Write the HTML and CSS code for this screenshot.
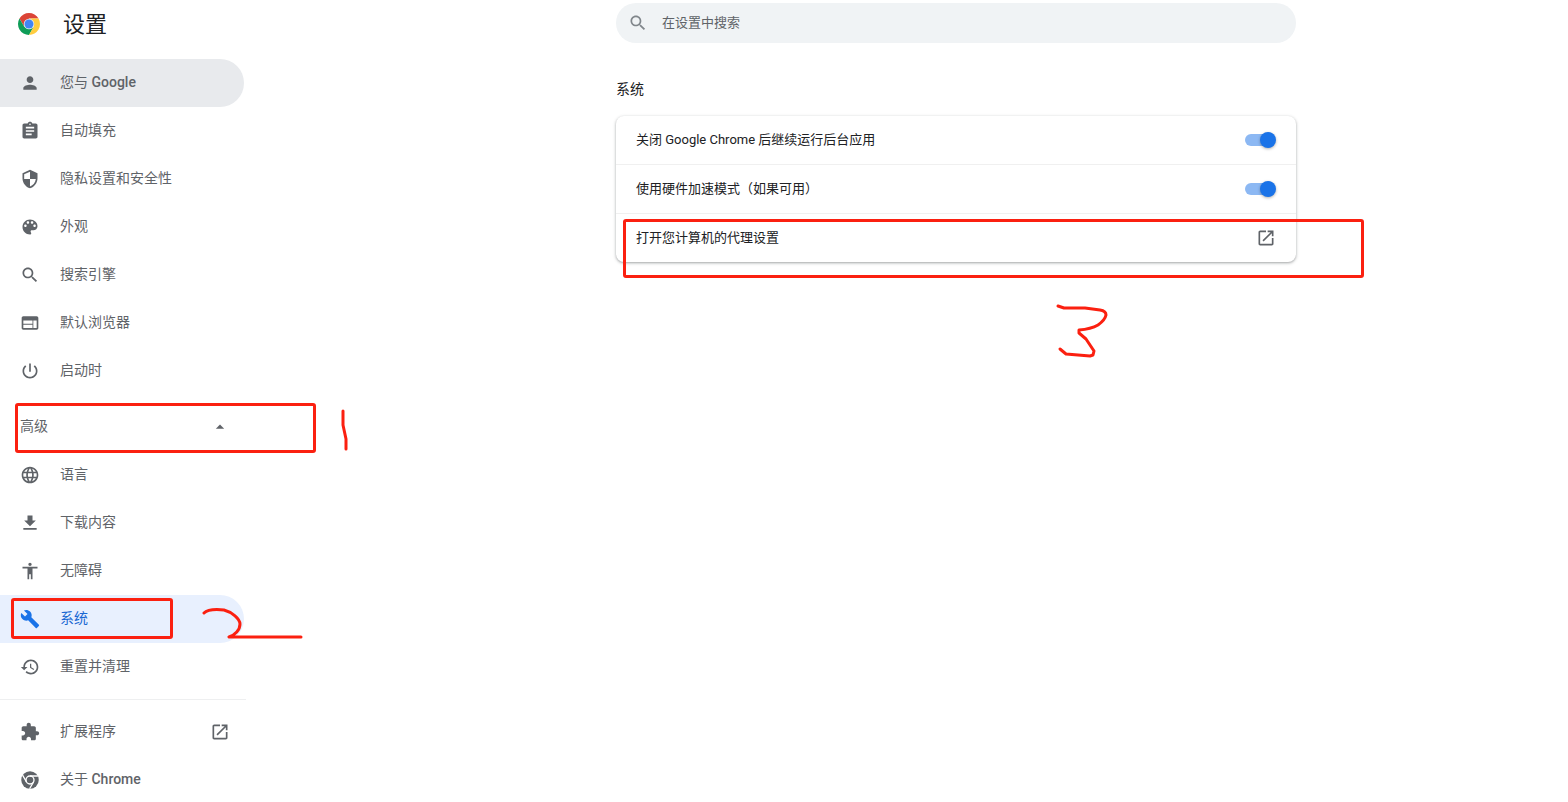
FILE: index.html
```html
<!DOCTYPE html>
<html lang="zh-CN">

<head>
    <meta charset="UTF-8">
    <meta name="viewport" content="width=device-width, initial-scale=1.0">
    <title>设置</title>
    <link rel="stylesheet" href="styles.css">
</head>

<body>
    <aside class="sidebar">
        <div class="brand">
            <svg class="logo" viewBox="0 0 48 48">
                <path fill="#db4437" d="M4.95 13A22 22 0 0 1 43.05 13H24L14.5 29.5z" />
                <path fill="#0f9d58" d="M4.95 13A22 22 0 0 0 24 46L33.5 29.5H14.5z" />
                <path fill="#ffcd40" d="M43.05 13A22 22 0 0 1 24 46L33.5 29.5 24 13z" />
                <circle cx="24" cy="24" r="10.5" fill="#f1f1f1" />
                <circle cx="24" cy="24" r="9" fill="#4285f4" />
            </svg>
            <h1>设置</h1>
        </div>
        <nav class="menu">
            <a href="#people" class="hovered">
                <svg class="icon" viewBox="0 0 24 24"><path d="M12 12c2.21 0 4-1.79 4-4s-1.79-4-4-4-4 1.79-4 4 1.79 4 4 4zm0 2c-2.67 0-8 1.34-8 4v2h16v-2c0-2.66-5.33-4-8-4z" /></svg>
                <span>您与 <b>Google</b></span>
            </a>
            <a href="#autofill">
                <svg class="icon" viewBox="0 0 24 24"><path d="M19 3h-4.18C14.4 1.84 13.3 1 12 1c-1.3 0-2.4.84-2.82 2H5c-1.1 0-2 .9-2 2v14c0 1.1.9 2 2 2h14c1.1 0 2-.9 2-2V5c0-1.1-.9-2-2-2zm-7 0c.55 0 1 .45 1 1s-.45 1-1 1-1-.45-1-1 .45-1 1-1zm2 14H7v-2h7v2zm3-4H7v-2h10v2zm0-4H7V7h10v2z" /></svg>
                <span>自动填充</span>
            </a>
            <a href="#privacy">
                <svg class="icon" viewBox="0 0 24 24"><path d="M12 1L3 5v6c0 5.55 3.84 10.74 9 12 5.16-1.26 9-6.45 9-12V5l-9-4zm0 10.99h7c-.53 4.12-3.28 7.79-7 8.94V12H5V6.3l7-3.11v8.8z" /></svg>
                <span>隐私设置和安全性</span>
            </a>
            <a href="#appearance">
                <svg class="icon" viewBox="0 0 24 24"><path d="M12 3c-4.97 0-9 4.03-9 9s4.03 9 9 9c.83 0 1.5-.67 1.5-1.5 0-.39-.15-.74-.39-1.01-.23-.26-.38-.61-.38-.99 0-.83.67-1.5 1.5-1.5H16c2.76 0 5-2.24 5-5 0-4.42-4.03-8-9-8zm-5.5 9c-.83 0-1.5-.67-1.5-1.5S5.67 9 6.5 9 8 9.67 8 10.5 7.33 12 6.5 12zm3-4C8.67 8 8 7.33 8 6.5S8.67 5 9.5 5s1.5.67 1.5 1.5S10.33 8 9.5 8zm5 0c-.83 0-1.5-.67-1.5-1.5S13.67 5 14.5 5s1.5.67 1.5 1.5S15.33 8 14.5 8zm3 4c-.83 0-1.5-.67-1.5-1.5S16.67 9 17.5 9s1.5.67 1.5 1.5-.67 1.5-1.5 1.5z" /></svg>
                <span>外观</span>
            </a>
            <a href="#search">
                <svg class="icon" viewBox="0 0 24 24"><path d="M15.5 14h-.79l-.28-.27C15.41 12.59 16 11.11 16 9.5 16 5.91 13.09 3 9.5 3S3 5.91 3 9.5 5.91 16 9.5 16c1.61 0 3.09-.59 4.23-1.57l.27.28v.79l5 4.99L20.49 19l-4.99-5zm-6 0C7.01 14 5 11.99 5 9.5S7.01 5 9.5 5 14 7.01 14 9.5 11.99 14 9.5 14z" /></svg>
                <span>搜索引擎</span>
            </a>
            <a href="#browser">
                <svg class="icon" viewBox="0 0 24 24"><path d="M20 4H4c-1.1 0-1.99.9-1.99 2L2 18c0 1.1.9 2 2 2h16c1.1 0 2-.9 2-2V6c0-1.1-.9-2-2-2zm-5 14H4v-4h11v4zm0-5H4V9h11v4zm5 5h-4V9h4v9z" /></svg>
                <span>默认浏览器</span>
            </a>
            <a href="#startup">
                <svg class="icon" viewBox="0 0 24 24"><path d="M13 3h-2v10h2V3zm4.83 2.17l-1.42 1.42C17.99 7.86 19 9.81 19 12c0 3.87-3.13 7-7 7s-7-3.13-7-7c0-2.19 1.01-4.14 2.58-5.42L6.17 5.17C4.23 6.82 3 9.26 3 12c0 4.97 4.03 9 9 9s9-4.03 9-9c0-2.74-1.23-5.18-3.17-6.83z" /></svg>
                <span>启动时</span>
            </a>

            <div class="advanced">
                <button type="button" aria-expanded="true">
                    <span>高级</span>
                    <svg class="icon" viewBox="0 0 24 24"><path d="M7 14l5-5 5 5z" /></svg>
                </button>
                <div class="mark mark-advanced"></div>
                <svg class="stroke stroke-one" viewBox="0 0 10 44"><path d="M3 3L3 17 6 31 6 41" /></svg>
            </div>

            <a href="#languages">
                <svg class="icon" viewBox="0 0 24 24"><path d="M11.99 2C6.47 2 2 6.48 2 12s4.47 10 9.99 10C17.52 22 22 17.52 22 12S17.52 2 11.99 2zm6.93 6h-2.95c-.32-1.25-.78-2.45-1.38-3.56 1.84.63 3.37 1.91 4.33 3.56zM12 4.04c.83 1.2 1.48 2.53 1.91 3.96h-3.82c.43-1.43 1.08-2.76 1.91-3.96zM4.26 14C4.1 13.36 4 12.69 4 12s.1-1.36.26-2h3.38c-.08.66-.14 1.32-.14 2s.06 1.34.14 2H4.26zm.82 2h2.95c.32 1.25.78 2.45 1.38 3.56-1.84-.63-3.37-1.9-4.33-3.56zm2.95-8H5.08c.96-1.66 2.49-2.93 4.33-3.56C8.81 5.55 8.35 6.75 8.03 8zM12 19.96c-.83-1.2-1.48-2.53-1.91-3.96h3.82c-.43 1.43-1.08 2.76-1.91 3.96zM14.34 14H9.66c-.09-.66-.16-1.32-.16-2s.07-1.35.16-2h4.68c.09.65.16 1.32.16 2s-.07 1.34-.16 2zm.25 5.56c.6-1.11 1.06-2.31 1.38-3.56h2.95c-.96 1.65-2.49 2.93-4.33 3.56zM16.36 14c.08-.66.14-1.32.14-2s-.06-1.34-.14-2h3.38c.16.64.26 1.31.26 2s-.1 1.36-.26 2h-3.38z" /></svg>
                <span>语言</span>
            </a>
            <a href="#downloads">
                <svg class="icon" viewBox="0 0 24 24"><path d="M19 9h-4V3H9v6H5l7 7 7-7zM4 18v2h16v-2H4z" /></svg>
                <span>下载内容</span>
            </a>
            <a href="#accessibility">
                <svg class="icon" viewBox="0 0 24 24"><path d="M12 2c1.1 0 2 .9 2 2s-.9 2-2 2-2-.9-2-2 .9-2 2-2zm9 7h-6v13h-2v-6h-2v6H9V9H3V7h18v2z" /></svg>
                <span>无障碍</span>
            </a>
            <a href="#system" class="active">
                <svg class="icon" viewBox="0 0 24 24"><path d="M22.7 19l-9.1-9.1c.9-2.3.4-5-1.5-6.9-2-2-5-2.4-7.4-1.3L9 6 6 9 1.6 4.7C.4 7.1.9 10.1 2.9 12.1c1.9 1.9 4.6 2.4 6.9 1.5l9.1 9.1c.4.4 1 .4 1.4 0l2.3-2.3c.5-.4.5-1.1.1-1.4z" /></svg>
                <span>系统</span>
                <div class="mark mark-system"></div>
                <svg class="stroke stroke-two" viewBox="0 0 104 34"><path d="M4 7C7 4 14 3 24 4 32 6 40 13 40 18 40 24 35 29 29 31L101 31" /></svg>
            </a>
            <a href="#reset">
                <svg class="icon" viewBox="0 0 24 24"><path d="M13 3c-4.97 0-9 4.03-9 9H1l3.89 3.89.07.14L9 12H6c0-3.87 3.13-7 7-7s7 3.13 7 7-3.13 7-7 7c-1.93 0-3.68-.79-4.94-2.06l-1.42 1.42C8.27 19.99 10.51 21 13 21c4.97 0 9-4.03 9-9s-4.03-9-9-9zm-1 5v5l4.28 2.54.72-1.21-3.5-2.08V8H12z" /></svg>
                <span>重置并清理</span>
            </a>
            <hr>
            <a href="#extensions">
                <svg class="icon" viewBox="0 0 24 24"><path d="M20.5 11H19V7c0-1.1-.9-2-2-2h-4V3.5C13 2.12 11.88 1 10.5 1S8 2.12 8 3.5V5H4c-1.1 0-1.99.9-1.99 2v3.8H3.5c1.49 0 2.7 1.21 2.7 2.7s-1.21 2.7-2.7 2.7H2V20c0 1.1.9 2 2 2h3.8v-1.5c0-1.49 1.21-2.7 2.7-2.7s2.7 1.21 2.7 2.7V22H17c1.1 0 2-.9 2-2v-4h1.5c1.38 0 2.5-1.12 2.5-2.5S21.88 11 20.5 11z" /></svg>
                <span>扩展程序</span>
                <svg class="icon external" viewBox="0 0 24 24"><path d="M19 19H5V5h7V3H5c-1.11 0-2 .9-2 2v14c0 1.1.89 2 2 2h14c1.1 0 2-.9 2-2v-7h-2v7zM14 3v2h3.59l-9.83 9.83 1.41 1.41L19 6.41V10h2V3h-7z" /></svg>
            </a>
            <a href="#about">
                <svg class="icon" viewBox="0 0 24 24">
                    <circle cx="12" cy="12" r="10.5" />
                    <g class="rings">
                        <circle cx="12" cy="12" r="4.8" />
                        <path d="M12 7.2H21.5M7.8 14.4L3.1 6.2M16.2 14.4L11.5 22.5" />
                    </g>
                </svg>
                <span>关于 <b>Chrome</b></span>
            </a>
        </nav>
    </aside>

    <main class="main-content">
        <label class="search-box">
            <svg class="icon" viewBox="0 0 24 24"><path d="M15.5 14h-.79l-.28-.27C15.41 12.59 16 11.11 16 9.5 16 5.91 13.09 3 9.5 3S3 5.91 3 9.5 5.91 16 9.5 16c1.61 0 3.09-.59 4.23-1.57l.27.28v.79l5 4.99L20.49 19l-4.99-5zm-6 0C7.01 14 5 11.99 5 9.5S7.01 5 9.5 5 14 7.01 14 9.5 11.99 14 9.5 14z" /></svg>
            <input type="text" placeholder="在设置中搜索" aria-label="在设置中搜索">
        </label>

        <h2>系统</h2>
        <section class="card">
            <label class="row">
                <span>关闭 Google Chrome 后继续运行后台应用</span>
                <input type="checkbox" class="toggle" checked>
            </label>
            <label class="row">
                <span>使用硬件加速模式（如果可用）</span>
                <input type="checkbox" class="toggle" checked>
            </label>
            <a href="#proxy" class="row">
                <span>打开您计算机的代理设置</span>
                <svg class="icon" viewBox="0 0 24 24"><path d="M19 19H5V5h7V3H5c-1.11 0-2 .9-2 2v14c0 1.1.89 2 2 2h14c1.1 0 2-.9 2-2v-7h-2v7zM14 3v2h3.59l-9.83 9.83 1.41 1.41L19 6.41V10h2V3h-7z" /></svg>
                <div class="mark mark-proxy"></div>
                <svg class="stroke stroke-three" viewBox="0 0 54 56"><path d="M2 3L8 5H29L44 7Q50 8 50 12 49 17 42 22 35 26 23 27L23 30 30 36 38 48 37 52 34 53 10 51 4 46" /></svg>
            </a>
        </section>
    </main>
</body>

</html>
```
FILE: styles.css
```css
* {
    box-sizing: border-box;
}

body {
    font-family: Roboto, "Noto Sans CJK SC", sans-serif;
    background-color: #fff;
    color: #202124;
    font-size: 13px;
    line-height: 20px;
    margin: 0;
    height: 100vh;
    display: flex;
    overflow: hidden;
}

a {
    color: inherit;
    text-decoration: none;
}

.icon {
    width: 20px;
    height: 20px;
    flex-shrink: 0;
    fill: #5f6368;
}

/* Sidebar */
.sidebar {
    width: 256px;
    flex-shrink: 0;
}

.brand {
    height: 47px;
    padding-left: 17px;
    display: flex;
    align-items: center;
    gap: 22px;
}

.logo {
    width: 24px;
    height: 24px;
}

.brand h1 {
    font-size: 22px;
    font-weight: 400;
    line-height: 32px;
    padding-top: 2px;
    margin: 0;
}

.menu {
    padding: 12px 10px 0 0;
    color: #5f6368;
    font-size: 14px;
}

.menu a {
    position: relative;
    height: 48px;
    margin-right: 2px;
    padding: 0 14px 0 20px;
    display: flex;
    align-items: center;
    gap: 20px;
    border-radius: 0 24px 24px 0;
}

.menu b {
    font-weight: 500;
}

.menu span {
    padding-bottom: 2px;
}

.menu a.hovered {
    background-color: #e8eaed;
}

.menu a.active {
    background-color: #e8f0fe;
    color: #1967d2;
}

.menu a.active .icon {
    fill: #1a73e8;
}

.menu .external {
    margin-left: auto;
}

.menu hr {
    border: none;
    border-top: 1px solid #eeeff0;
    margin: 8px 0;
}

.rings {
    fill: none;
    stroke: #fff;
    stroke-width: 1.6;
}

.advanced {
    position: relative;
    margin: 8px 2px 0 0;
}

.advanced button {
    width: 100%;
    height: 48px;
    padding: 0 14px 0 20px;
    display: flex;
    align-items: center;
    justify-content: space-between;
    border: none;
    background: none;
    color: inherit;
    font: inherit;
    cursor: pointer;
}

/* Main */
.main-content {
    flex: 1;
    padding: 3px 0 0 88px;
    display: flex;
    flex-direction: column;
    align-items: center;
}

.search-box,
.main-content h2,
.card {
    width: 100%;
    max-width: 680px;
}

.search-box {
    height: 40px;
    padding: 0 12px;
    display: flex;
    align-items: center;
    gap: 14px;
    background-color: #f0f3f5;
    border-radius: 20px;
}

.search-box .icon {
    fill: #80868b;
}

.search-box input {
    flex: 1;
    border: none;
    outline: none;
    background: none;
    padding: 0;
    color: #202124;
    font: inherit;
}

.search-box input::placeholder {
    color: #5f6368;
    opacity: 1;
}

.main-content h2 {
    font-size: 14px;
    font-weight: 400;
    margin: 36px 0 17px;
}

.card {
    border-radius: 8px;
    box-shadow: 0 1px 2px rgba(60, 64, 67, 0.3), 0 1px 3px 1px rgba(60, 64, 67, 0.15);
}

.row {
    position: relative;
    height: 48px;
    padding: 0 20px;
    display: flex;
    align-items: center;
    justify-content: space-between;
}

.row + .row {
    height: 49px;
    border-top: 1px solid #f0f0f0;
}

.toggle {
    appearance: none;
    width: 31px;
    height: 16px;
    margin: 0;
    display: grid;
    align-items: center;
    cursor: pointer;
}

.toggle::before,
.toggle::after {
    content: "";
    grid-area: 1 / 1;
}

.toggle::before {
    width: 28px;
    height: 12px;
    border-radius: 6px;
    background-color: #8cb8f3;
}

.toggle::after {
    width: 16px;
    height: 16px;
    justify-self: end;
    border-radius: 50%;
    background-color: #1a73e8;
    box-shadow: 0 1px 3px rgba(0, 0, 0, 0.3);
}

/* Red pen marks drawn over the page */
.mark {
    position: absolute;
    z-index: 1;
    border: 3px solid #fb2010;
    border-radius: 3px;
    pointer-events: none;
}

.stroke {
    position: absolute;
    z-index: 1;
    fill: none;
    stroke: #fb2010;
    stroke-width: 3;
    stroke-linecap: round;
    stroke-linejoin: round;
    pointer-events: none;
}

.mark-advanced {
    left: 15px;
    top: 0;
    width: 301px;
    height: 50px;
}

.mark-system {
    left: 11px;
    top: 3px;
    width: 162px;
    height: 41px;
}

.mark-proxy {
    left: 7px;
    top: 5px;
    width: 741px;
    height: 59px;
}

.stroke-one {
    left: 340px;
    top: 5px;
    width: 10px;
    height: 44px;
}

.stroke-two {
    left: 200px;
    top: 11px;
    width: 104px;
    height: 34px;
}

.stroke-three {
    left: 440px;
    top: 89px;
    width: 54px;
    height: 56px;
}
```
